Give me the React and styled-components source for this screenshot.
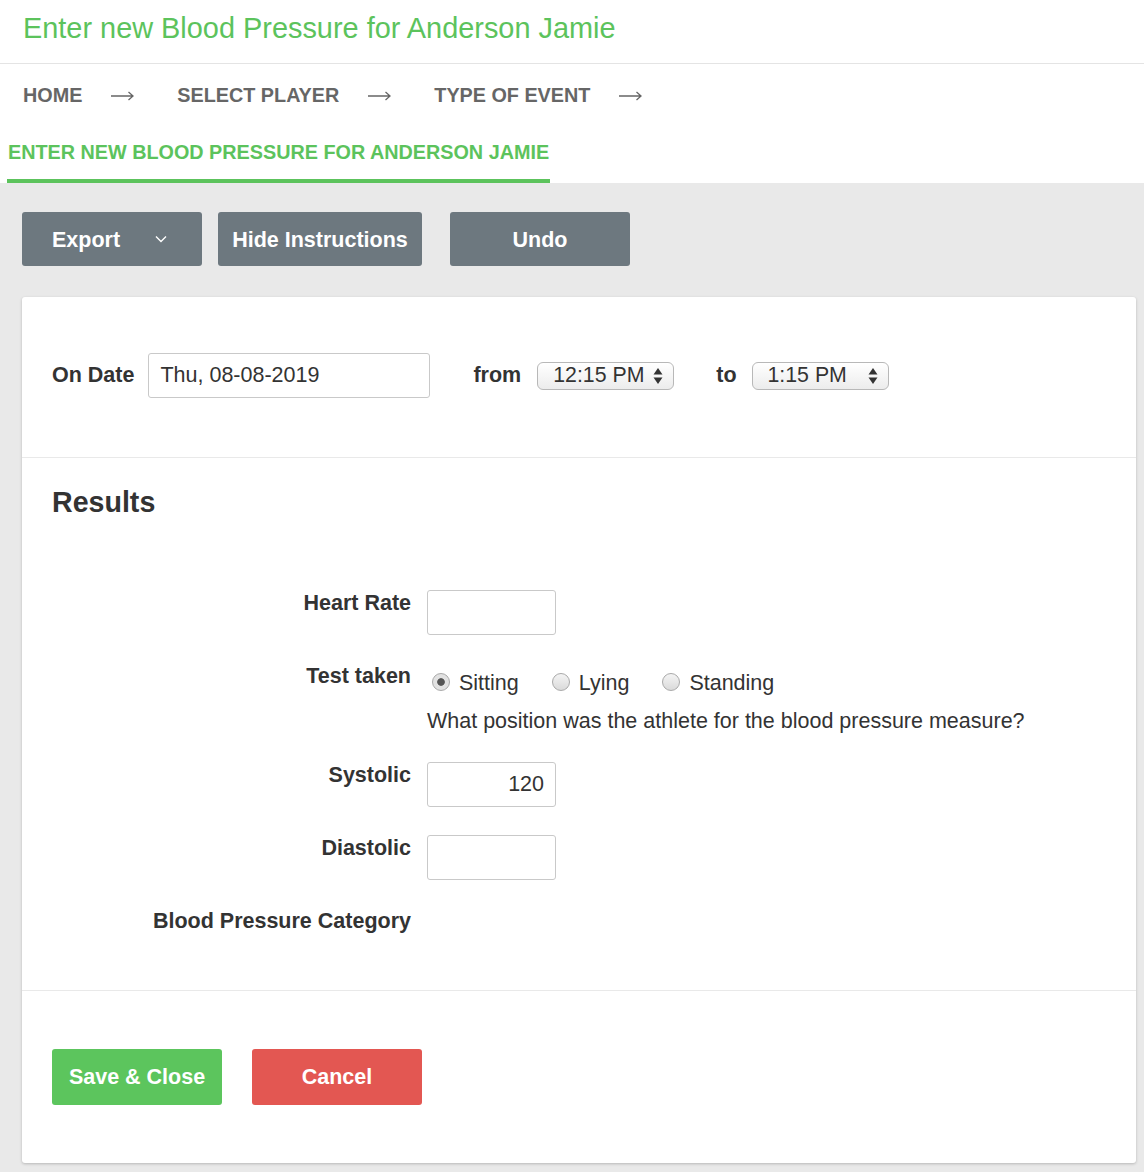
import React from 'react'
import styled, { createGlobalStyle } from 'styled-components'

const Global = createGlobalStyle`
  html, body {
    margin: 0;
    padding: 0;
    background: #e9e9e9;
  }
  body {
    font-family: "Liberation Sans", Arial, Helvetica, sans-serif;
    color: #333;
  }
  * { box-sizing: border-box; }
`

const Header = styled.header`
  background: #fff;
  height: 64px;
  border-bottom: 1px solid #e4e4e4;
  padding-left: 23px;
  display: flex;
  align-items: center;
`

const Title = styled.h1`
  margin: 0;
  font-size: 28.9px;
  font-weight: normal;
  color: #5cc35c;
  line-height: 1;
  position: relative;
  top: -3px;
`

const Nav = styled.nav`
  background: #fff;
  display: flex;
  flex-wrap: wrap;
  align-items: flex-start;
  padding: 0 8px;
`

const Crumb = styled.span`
  padding-left: ${p => (p.active ? '1px' : '15px')};
  padding-right: ${p => (p.active ? '1px' : '0')};
  font-size: 19.8px;
  font-weight: bold;
  text-transform: uppercase;
  color: ${p => (p.active ? '#5cc35c' : '#666')};
  line-height: ${p => (p.active ? '53px' : '62px')};
  border-bottom: ${p => (p.active ? '4px solid #5cc35c' : 'none')};
  margin-left: ${p => (p.active ? '-1px' : '0')};
`

const ArrowBox = styled.span`
  height: 62px;
  display: flex;
  align-items: center;
  margin: 0 28px 0 29px;
  padding-top: 2px;
`

const Arrow = () => (
  <ArrowBox>
    <svg width="23" height="10" viewBox="0 0 23 10">
      <path d="M0 5 H22 M17.5 1 L22 5 L17.5 9" fill="none" stroke="#666" strokeWidth="1.3" />
    </svg>
  </ArrowBox>
)

const Main = styled.main`
  padding: 29px 8px 10px 22px;
`

const Toolbar = styled.div`
  display: flex;
  align-items: center;
  margin-bottom: 31px;
`

const ToolButton = styled.button`
  height: 54px;
  width: ${p => p.w}px;
  margin-right: ${p => p.gap || 0}px;
  background: #6d787f;
  color: #fff;
  border: none;
  border-radius: 3px;
  font-family: inherit;
  font-size: 21.5px;
  font-weight: bold;
  display: flex;
  align-items: center;
  justify-content: ${p => (p.left ? 'flex-start' : 'center')};
  padding: 3px ${p => (p.left ? '30px' : '0')} 0;
  cursor: pointer;
`

const Chevron = styled.svg`
  margin-left: 35px;
  margin-top: -3px;
`

const Card = styled.section`
  background: #fff;
  border-radius: 3px;
  box-shadow: 0 1px 3px rgba(0, 0, 0, 0.22);
`

const Section = styled.div`
  padding: ${p => p.pad};
  border-top: ${p => (p.divided ? '1px solid #e9e9e9' : 'none')};
`

const DateRow = styled.div`
  display: flex;
  align-items: center;
`

const InlineLabel = styled.label`
  font-size: 21.5px;
  font-weight: bold;
  color: #333;
  margin-right: ${p => p.mr}px;
  margin-left: ${p => p.ml || 0}px;
`

const TextInput = styled.input`
  height: 45px;
  width: ${p => p.w}px;
  border: 1px solid #c9c9c9;
  border-radius: 3px;
  font-family: inherit;
  font-size: 21.5px;
  color: #333;
  padding: 0 11px;
  text-align: ${p => (p.right ? 'right' : 'left')};
  outline: none;
  background: #fff;
`

const FakeSelect = styled.div`
  height: 28px;
  width: 137px;
  border: 1px solid #b8b8b8;
  border-radius: 6px;
  background: linear-gradient(#ffffff, #ececec);
  display: flex;
  align-items: center;
  justify-content: space-between;
  padding: 0 10px 0 15px;
  font-size: 21.3px;
  color: #333;
`

const Heading = styled.h2`
  margin: 0 0 71px;
  font-size: 28.6px;
  line-height: 34px;
  font-weight: bold;
  color: #333;
`

const FormGrid = styled.div`
  display: grid;
  grid-template-columns: 359px 1fr;
  column-gap: 16px;
  row-gap: 28px;
  align-items: start;
`

const FieldLabel = styled.div`
  text-align: right;
  font-size: 21.5px;
  font-weight: bold;
  line-height: 26px;
  color: #333;
`

const RadioRow = styled.div`
  display: flex;
  align-items: center;
  height: 36px;
`

const RadioOption = styled.label`
  display: flex;
  align-items: center;
  margin-right: 28px;
  font-size: 21.5px;
  color: #333;
  padding-top: 4px;
`

const RadioDot = styled.span`
  width: 18px;
  height: 18px;
  border-radius: 50%;
  border: 1px solid #a9a9a9;
  background: ${p =>
    p.checked
      ? 'radial-gradient(circle, #555 0, #555 3.4px, #e2e2e2 4.2px)'
      : 'linear-gradient(#f4f4f4, #dadada)'};
  margin: -3px 9px 0 5px;
  flex: none;
`

const Help = styled.div`
  margin-top: 9px;
  font-size: 21.5px;
  line-height: 26px;
  color: #333;
`

const ActionRow = styled.div`
  display: flex;
  gap: 30px;
`

const ActionButton = styled.button`
  width: 170px;
  height: 56px;
  border: none;
  border-radius: 3px;
  background: ${p => p.bg};
  color: #fff;
  font-family: inherit;
  font-size: 21.5px;
  font-weight: bold;
  cursor: pointer;
`

const Updown = () => (
  <svg width="10" height="18" viewBox="0 0 10 18">
    <path d="M5 1 L9.5 7.5 H0.5 Z" fill="#333" />
    <path d="M5 17 L9.5 10.5 H0.5 Z" fill="#333" />
  </svg>
)

const radios = ['Sitting', 'Lying', 'Standing']

export default function App() {
  return (
    <>
      <Global />
      <Header>
        <Title>Enter new Blood Pressure for Anderson Jamie</Title>
      </Header>
      <Nav>
        <Crumb>Home</Crumb>
        <Arrow />
        <Crumb>Select Player</Crumb>
        <Arrow />
        <Crumb>Type of Event</Crumb>
        <Arrow />
        <Crumb active>Enter new Blood Pressure for Anderson Jamie</Crumb>
      </Nav>
      <Main>
        <Toolbar>
          <ToolButton w={180} gap={16} left>
            Export
            <Chevron width="12" height="8" viewBox="0 0 12 8">
              <path d="M1 1.5 L6 6.5 L11 1.5" fill="none" stroke="#fff" strokeWidth="1.4" />
            </Chevron>
          </ToolButton>
          <ToolButton w={204} gap={28}>Hide Instructions</ToolButton>
          <ToolButton w={180}>Undo</ToolButton>
        </Toolbar>
        <Card>
          <Section pad="56px 30px 59px">
            <DateRow>
              <InlineLabel mr={14}>On Date</InlineLabel>
              <TextInput w={282} defaultValue="Thu, 08-08-2019" />
              <InlineLabel ml={43} mr={16}>from</InlineLabel>
              <FakeSelect>
                12:15 PM
                <Updown />
              </FakeSelect>
              <InlineLabel ml={42} mr={15}>to</InlineLabel>
              <FakeSelect>
                1:15 PM
                <Updown />
              </FakeSelect>
            </DateRow>
          </Section>
          <Section divided pad="27px 30px 56px">
            <Heading>Results</Heading>
            <FormGrid>
              <FieldLabel>Heart Rate</FieldLabel>
              <TextInput w={129} right />
              <FieldLabel>Test taken</FieldLabel>
              <div>
                <RadioRow>
                  {radios.map(r => (
                    <RadioOption key={r}>
                      <RadioDot checked={r === 'Sitting'} />
                      {r}
                    </RadioOption>
                  ))}
                </RadioRow>
                <Help>What position was the athlete for the blood pressure measure?</Help>
              </div>
              <FieldLabel>Systolic</FieldLabel>
              <TextInput w={129} right defaultValue="120" />
              <FieldLabel>Diastolic</FieldLabel>
              <TextInput w={129} right />
              <FieldLabel>Blood Pressure Category</FieldLabel>
              <div />
            </FormGrid>
          </Section>
          <Section divided pad="58px 30px 58px">
            <ActionRow>
              <ActionButton bg="#5cc55d">Save &amp; Close</ActionButton>
              <ActionButton bg="#e35752">Cancel</ActionButton>
            </ActionRow>
          </Section>
        </Card>
      </Main>
    </>
  )
}
